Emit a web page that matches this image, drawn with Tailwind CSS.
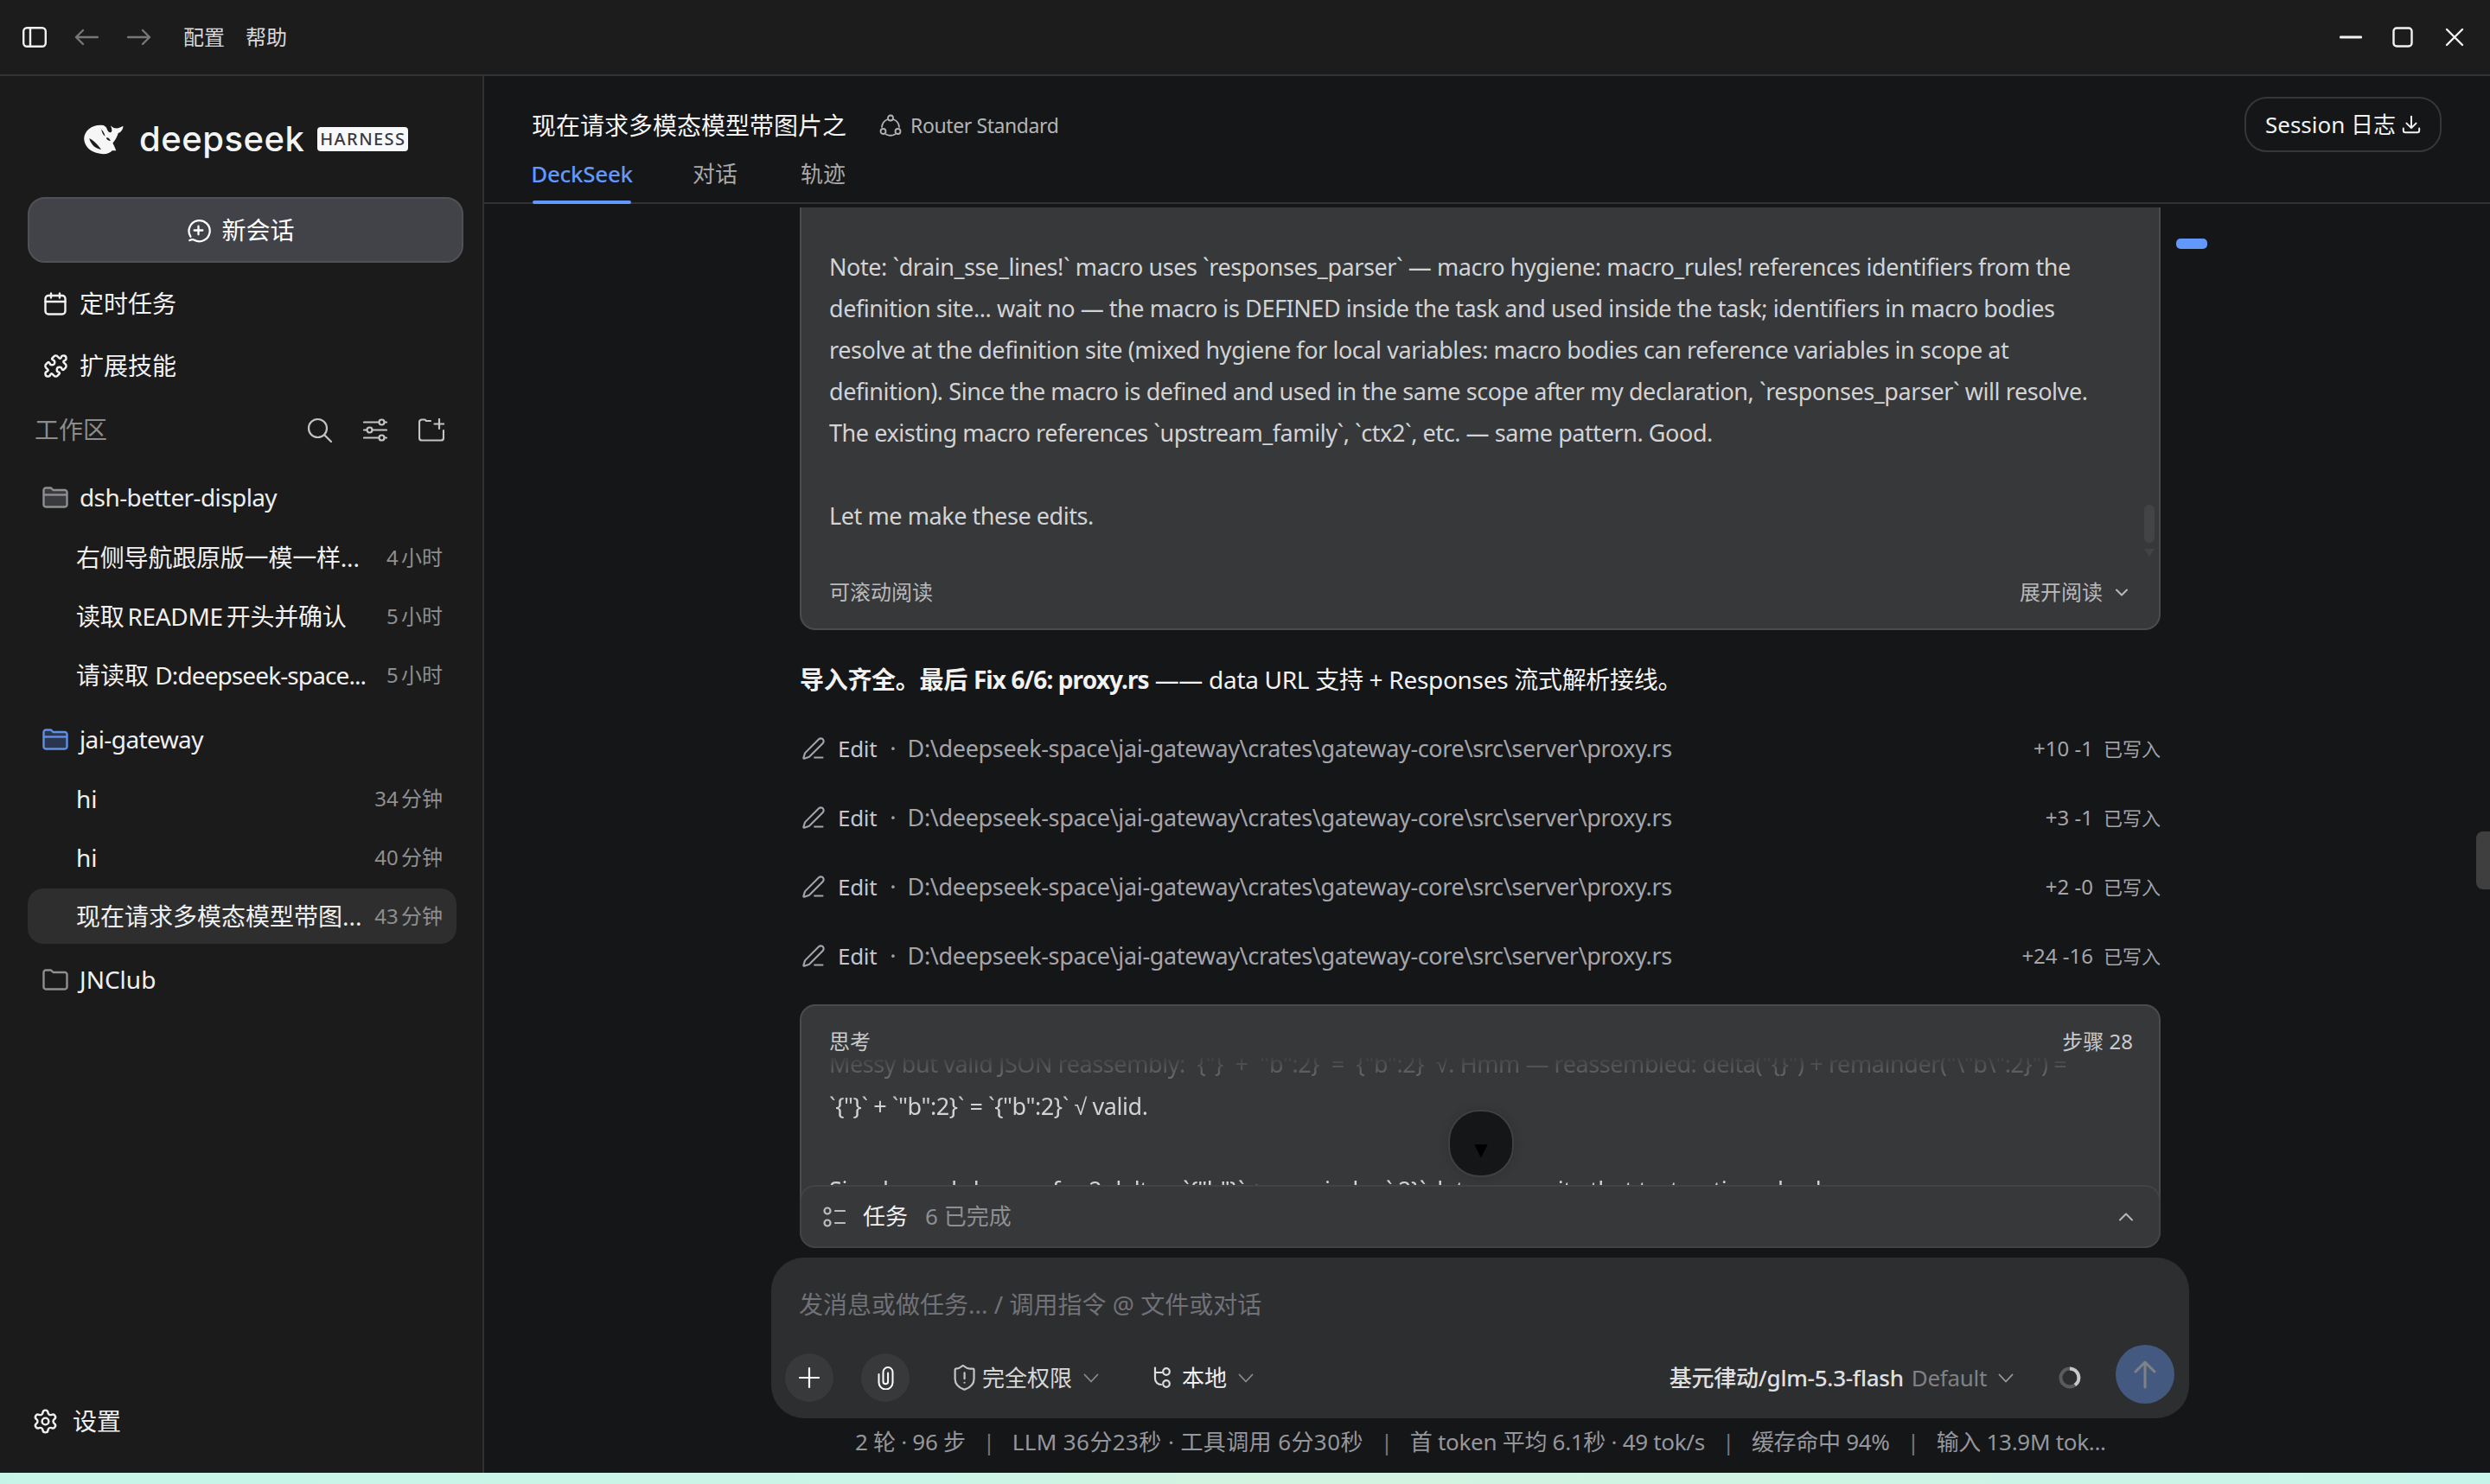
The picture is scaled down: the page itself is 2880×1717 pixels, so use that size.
<!DOCTYPE html>
<html lang="zh">
<head>
<meta charset="utf-8">
<title>DeepSeek Harness</title>
<script src="https://cdn.jsdelivr.net/npm/@tailwindcss/browser@4"></script>
</head>
<body class="bg-[#151618]">
<div class="w-[2880px] h-[1717px] overflow-hidden flex flex-col text-[#e8e8e8] [font-family:'Noto_Sans','Noto_Sans_CJK_SC',sans-serif]">
  <!-- title bar -->
  <header class="h-[88px] shrink-0 flex items-center bg-[#1c1c1c] border-b-2 border-[#333333] pl-[26px] pr-[30px]">
    <svg class="w-[28px] h-[24px] text-[#f0f0f0]" viewBox="0 0 28 24" fill="none" stroke="currentColor" stroke-width="2.4"><rect x="1.2" y="1.2" width="25.6" height="21.6" rx="4"/><path d="M9 1.5v21"/></svg>
    <svg class="ml-[32px] w-[28px] h-[22px] text-[#777777]" viewBox="0 0 28 22" fill="none" stroke="currentColor" stroke-width="2.4" stroke-linecap="round" stroke-linejoin="round"><path d="M27 11H2M10 3l-8 8 8 8"/></svg>
    <svg class="ml-[33px] w-[28px] h-[22px] text-[#777777]" viewBox="0 0 28 22" fill="none" stroke="currentColor" stroke-width="2.4" stroke-linecap="round" stroke-linejoin="round"><path d="M1 11h25M18 3l8 8-8 8"/></svg>
    <span class="ml-[37px] text-[24px] text-[#d8d8d8]">配置</span>
    <span class="ml-[24px] text-[24px] text-[#d8d8d8]">帮助</span>
    <div class="ml-auto flex items-center text-[#f2f2f2]">
      <svg class="w-[26px] h-[4px]" viewBox="0 0 26 4"><rect width="26" height="3" y="0.5" rx="1" fill="currentColor"/></svg>
      <svg class="ml-[35px] w-[24px] h-[24px]" viewBox="0 0 24 24" fill="none" stroke="currentColor" stroke-width="2.4"><rect x="1.5" y="1.5" width="21" height="21" rx="3.5"/></svg>
      <svg class="ml-[37px] w-[22px] h-[22px]" viewBox="0 0 22 22" fill="none" stroke="currentColor" stroke-width="2.4" stroke-linecap="round"><path d="M2 2l18 18M20 2L2 20"/></svg>
    </div>
  </header>

  <div class="flex-1 min-h-0 flex">
    <!-- sidebar -->
    <aside class="w-[560px] shrink-0 bg-[#1b1b1b] border-r-2 border-[#303030] flex flex-col">
      <div class="mt-[55px] mb-[49px] h-[36px] flex items-center pl-[95px]">
        <svg class="w-[50px] h-[38px]" viewBox="0 0 150 120"><path fill="#f6f6f6" d="M3 58C4 32 28 8 66 9c12 0 19 6 22 17 4 10 12 12 16 6 2-6 0-12-4-22 6 6 12 10 18 10 10 2 18-4 28-8 0 12-8 24-18 26-4 12-10 26-20 36 4 8 8 16 12 28h-14c-8 10-28 16-48 10C28 108 4 88 3 58Z"/><path fill="#1b1b1b" d="M22 58c12 4 28 18 44 40-18-2-36-14-44-40ZM84 56c6-4 12 2 16 10-8 0-14-4-16-10ZM66 24c8 8 12 16 14 26-8-6-12-14-14-26Z"/></svg>
        <span class="ml-[16px] text-[40px] leading-[36px] font-medium tracking-[0.5px] text-[#f4f4f4] [font-family:'Inter',sans-serif]">deepseek</span>
        <span class="ml-[15px] h-[28px] w-[105px] flex items-center justify-center rounded-[4px] bg-[#f8f9fb] text-[20px] font-medium tracking-[1.4px] text-[#3a3a3e]">HARNESS</span>
      </div>
      <button class="ml-[32px] w-[504px] h-[76px] shrink-0 rounded-[20px] bg-[#424349] border-2 border-[#505157] flex items-center justify-center pr-[12px] text-[28px] text-white">
        <svg class="w-[29px] h-[29px] mr-[12px]" viewBox="0 0 24 24" fill="none" stroke="currentColor" stroke-width="1.9" stroke-linecap="round" stroke-linejoin="round"><path d="M4.5 18A10 10 0 1 1 8 21.3C7 20.4 5.5 20.6 3.6 21.6"/><path d="M8 12h8M12 8v8"/></svg>
        新会话
      </button>
      <nav class="mt-[11px] text-[28px] text-[#f2f2f2]">
        <a class="h-[72px] flex items-center pl-[51px]">
          <svg class="w-[26px] h-[27px] mr-[15px]" viewBox="0 0 26 27" fill="none" stroke="currentColor" stroke-width="2.4" stroke-linecap="round"><rect x="1.5" y="4" width="23" height="21.5" rx="3.5"/><path d="M8 1.5v5M18 1.5v5M1.5 11h23"/></svg>
          定时任务
        </a>
        <a class="h-[72px] flex items-center pl-[50px]">
          <svg class="w-[29px] h-[29px] mr-[13px]" viewBox="0 0 24 24" fill="none" stroke="currentColor" stroke-width="2" stroke-linecap="round" stroke-linejoin="round"><path d="M15.39 4.39a1 1 0 0 0 1.68-.474 2.5 2.5 0 1 1 3.014 3.015 1 1 0 0 0-.474 1.68l1.683 1.682a2.414 2.414 0 0 1 0 3.414L19.61 15.39a1 1 0 0 1-1.68-.474 2.5 2.5 0 1 0-3.014 3.015 1 1 0 0 1 .474 1.68l-1.683 1.682a2.414 2.414 0 0 1-3.414 0L8.61 19.61a1 1 0 0 0-1.68.474 2.5 2.5 0 1 1-3.014-3.015 1 1 0 0 0 .474-1.68l-1.683-1.682a2.414 2.414 0 0 1 0-3.414L4.39 8.61a1 1 0 0 1 1.68.474 2.5 2.5 0 1 0 3.014-3.015 1 1 0 0 1-.474-1.68l1.683-1.682a2.414 2.414 0 0 1 3.414 0z"/></svg>
          扩展技能
        </a>
      </nav>
      <div class="mt-[8px] h-[60px] flex items-center pl-[40px] text-[28px] text-[#8c8c8c]">
        工作区
        <div class="ml-auto mr-[44px] flex items-center text-[#c4c4c4] gap-[36px]">
          <svg class="w-[29px] h-[29px]" viewBox="0 0 29 29" fill="none" stroke="currentColor" stroke-width="2.2" stroke-linecap="round"><circle cx="12.5" cy="12.5" r="10.5"/><path d="M21 21l7 7"/></svg>
          <svg class="w-[28px] h-[27px]" viewBox="0 0 28 27" fill="none" stroke="currentColor" stroke-width="2.2" stroke-linecap="round"><path d="M1 4.5h17M25 4.5h2M1 13.5h3M11 13.5h16M1 22.5h17M25 22.5h2"/><circle cx="21.5" cy="4.5" r="3"/><circle cx="7.5" cy="13.5" r="3"/><circle cx="21.5" cy="22.5" r="3"/></svg>
          <svg class="w-[30px] h-[27px]" viewBox="0 0 30 27" fill="none" stroke="currentColor" stroke-width="2.2" stroke-linecap="round" stroke-linejoin="round"><path d="M14 3H9L7.5 1.5H4A3 3 0 0 0 1 4.5v18a3 3 0 0 0 3 3h22a3 3 0 0 0 3-3V14"/><path d="M24 1v11M18.500 6.500h11"/></svg>
        </div>
      </div>
      <ul class="mt-[14px] text-[28px] text-[#f0f0f0]">
        <li class="h-[68px] flex items-center pl-[49px] text-[#eeeeee]">
          <svg class="w-[30px] h-[25px] mr-[13px]" viewBox="0 0 30 25" fill="none" stroke="#8f8f92" stroke-width="2.4" stroke-linejoin="round"><path d="M1.500 4a2.500 2.500 0 0 1 2.500-2.500h6l2.500 2.500h13.500a2.500 2.500 0 0 1 2.500 2.500V21a2.500 2.500 0 0 1-2.500 2.500H4A2.500 2.500 0 0 1 1.500 21Z" fill="#3a3b3e"/><path d="M2 9.500h26"/></svg>
          <span class="tracking-[-0.6px]">dsh-better-display</span>
        </li>
        <li class="h-[68px] mt-[2px] ml-[32px] w-[496px] pl-[56px] pr-[16px] flex items-center justify-between"><span class="tracking-[-0.2px]">右侧导航跟原版一模一样...</span><span class="text-[24px] text-[#8f8f8f] [word-spacing:-3px]">4 小时</span></li>
        <li class="h-[68px] ml-[32px] w-[496px] pl-[56px] pr-[16px] flex items-center justify-between"><span class="tracking-[-0.3px] [word-spacing:-3px]">读取 README 开头并确认</span><span class="text-[24px] text-[#8f8f8f] [word-spacing:-3px]">5 小时</span></li>
        <li class="h-[68px] ml-[32px] w-[496px] pl-[56px] pr-[16px] flex items-center justify-between"><span>请读取 <span class="tracking-[-0.9px]">D:deepseek-space...</span></span><span class="text-[24px] text-[#8f8f8f] [word-spacing:-3px]">5 小时</span></li>
        <li class="h-[68px] mt-[6px] flex items-center pl-[49px]">
          <svg class="w-[30px] h-[25px] mr-[13px]" viewBox="0 0 30 25" fill="none" stroke="#5f8fe8" stroke-width="2.4" stroke-linejoin="round"><path d="M1.500 4a2.500 2.500 0 0 1 2.500-2.500h6l2.500 2.500h13.500a2.500 2.500 0 0 1 2.500 2.500V21a2.500 2.500 0 0 1-2.500 2.500H4A2.500 2.500 0 0 1 1.500 21Z" fill="#2a3550"/><path d="M2 9.500h26"/></svg>
          <span class="tracking-[-0.6px]">jai-gateway</span>
        </li>
        <li class="h-[68px] mt-[1px] ml-[32px] w-[496px] pl-[56px] pr-[16px] flex items-center justify-between"><span>hi</span><span class="text-[24px] text-[#8f8f8f] [word-spacing:-3px]">34 分钟</span></li>
        <li class="h-[68px] ml-[32px] w-[496px] pl-[56px] pr-[16px] flex items-center justify-between"><span>hi</span><span class="text-[24px] text-[#8f8f8f] [word-spacing:-3px]">40 分钟</span></li>
        <li class="h-[64px] my-[2px] ml-[32px] w-[496px] pl-[56px] pr-[16px] flex items-center justify-between rounded-[18px] bg-[#2e2e2e]"><span>现在请求多模态模型带图...</span><span class="text-[24px] text-[#8f8f8f] [word-spacing:-3px]">43 分钟</span></li>
        <li class="h-[68px] mt-[7px] flex items-center pl-[49px]">
          <svg class="w-[30px] h-[25px] mr-[13px]" viewBox="0 0 30 25" fill="none" stroke="#8f8f92" stroke-width="2.4" stroke-linejoin="round"><path d="M1.500 4a2.500 2.500 0 0 1 2.500-2.500h6l2.500 2.500h13.500a2.500 2.500 0 0 1 2.500 2.500V21a2.500 2.500 0 0 1-2.500 2.500H4A2.500 2.500 0 0 1 1.500 21Z"/></svg>
          JNClub
        </li>
      </ul>
      <div class="mt-auto mb-[30px] h-[60px] flex items-center pl-[37px] text-[28px] text-[#f0f0f0]">
        <svg class="w-[31px] h-[31px] mr-[16px]" viewBox="0 0 24 24" fill="none" stroke="currentColor" stroke-width="1.9" stroke-linecap="round" stroke-linejoin="round"><path d="M9.671 4.136a2.34 2.34 0 0 1 4.659 0 2.34 2.34 0 0 0 3.319 1.915 2.34 2.34 0 0 1 2.33 4.033 2.34 2.34 0 0 0 0 3.831 2.34 2.34 0 0 1-2.33 4.033 2.34 2.34 0 0 0-3.319 1.915 2.34 2.34 0 0 1-4.659 0 2.34 2.34 0 0 0-3.32-1.915 2.34 2.34 0 0 1-2.33-4.033 2.34 2.34 0 0 0 0-3.831A2.34 2.34 0 0 1 6.35 6.051a2.34 2.34 0 0 0 3.319-1.915"/><circle cx="12" cy="12" r="3"/></svg>
        设置
      </div>
    </aside>

    <!-- main -->
    <main class="relative flex-1 min-w-0 flex flex-col bg-[#151618]">
      <div class="h-[148px] shrink-0 border-b-2 border-[#303133] pl-[55px] pr-[55px] flex flex-col">
        <div class="h-[88px] flex items-center">
          <h1 class="text-[28px] text-[#f4f4f4] font-normal pt-[26px]">现在请求多模态模型带图片之</h1>
          <div class="pt-[26px] flex items-center ml-[38px] text-[23px] tracking-[-0.4px] text-[#b4b4b4]">
            <svg class="w-[26px] h-[26px] mr-[10px]" viewBox="0 0 26 26" fill="none" stroke="currentColor" stroke-width="1.8" stroke-linecap="round"><circle cx="13" cy="4.500" r="3"/><circle cx="4.500" cy="20" r="3"/><circle cx="21.500" cy="20" r="3"/><path d="M10 6A10.500 10.500 0 0 0 3 15M16 6A10.500 10.500 0 0 1 23 15M8 23.500a11 11 0 0 0 10 0"/></svg>
            Router Standard
          </div>
          <button class="ml-auto mt-[24px] mr-[1px] h-[64px] w-[228px] rounded-[26px] border-2 border-[#36373a] flex items-center justify-center text-[26px] text-[#f2f2f2]">
            Session 日志
            <svg class="ml-[7px] w-[22px] h-[22px]" viewBox="0 0 24 24" fill="none" stroke="currentColor" stroke-width="2.200" stroke-linecap="round" stroke-linejoin="round"><path d="M12 2v14M6 10.500l6 6 6-6M2 17v2.500A2.500 2.500 0 0 0 4.500 22h15a2.500 2.500 0 0 0 2.500-2.500V17"/></svg>
          </button>
        </div>
        <nav class="flex-1 flex text-[26px] text-[#a8a8a8]">
          <a class="relative ml-[1px] w-[114px] flex items-center justify-center h-[59px] pb-[8px] font-medium tracking-[-0.3px] text-[#6398fb] after:absolute after:left-0 after:right-0 after:bottom-[-1px] after:h-[4px] after:rounded-[2px] after:bg-[#6398fb]">DeckSeek</a>
          <a class="ml-[71px] h-[59px] pb-[8px] flex items-center">对话</a>
          <a class="ml-[73px] h-[59px] pb-[8px] flex items-center">轨迹</a>
        </nav>
      </div>

      <!-- side marker & page scrollbar -->
      <span class="absolute left-[1957px] top-[188px] w-[36px] h-[12px] rounded-[5px] bg-[#6398fb]"></span>
      <span class="absolute right-0 top-[874px] w-[16px] h-[67px] rounded-l-[8px] bg-[#3f3f3f]"></span>

      <section class="flex-1 min-h-0 overflow-hidden pt-[4px] pl-[365px]">
        <div class="w-[1574px] flex flex-col">
          <div class="relative h-[489px] rounded-b-[18px] bg-[#37383a] border-x-2 border-b-2 border-[#4a4b4d] px-[32px] pt-[45px]">
            <div class="text-[27px] leading-[48px] text-[#d2d3d5] tracking-[-0.43px] whitespace-nowrap">
              <p>Note: `drain_sse_lines!` macro uses `responses_parser` — macro hygiene: macro_rules! references identifiers from the</p>
              <p>definition site... wait no — the macro is DEFINED inside the task and used inside the task; identifiers in macro bodies</p>
              <p>resolve at the definition site (mixed hygiene for local variables: macro bodies can reference variables in scope at</p>
              <p>definition). Since the macro is defined and used in the same scope after my declaration, `responses_parser` will resolve.</p>
              <p>The existing macro references `upstream_family`, `ctx2`, etc. — same pattern. Good.</p>
              <p class="h-[48px]"></p>
              <p>Let me make these edits.</p>
            </div>
            <div class="mt-[42px] h-[44px] flex items-center justify-between text-[24px] text-[#b9babc]">
              <span>可滚动阅读</span>
              <span class="flex items-center">展开阅读
                <svg class="ml-[15px] w-[14px] h-[9px] mr-[4px]" viewBox="0 0 14 9" fill="none" stroke="currentColor" stroke-width="2" stroke-linecap="round" stroke-linejoin="round"><path d="M1 1.500l6 6 6-6"/></svg>
              </span>
            </div>
            <span class="absolute right-[5px] top-[344px] w-[12px] h-[44px] rounded-[6px] bg-[#434446]"></span>
            <span class="absolute right-[5px] top-[395px] w-0 h-0 border-x-[6px] border-x-transparent border-t-[9px] border-t-[#434446]"></span>
          </div>

          <p class="mt-[33px] h-[48px] leading-[48px] text-[28px] text-[#f2f2f2] tracking-[-0.3px] whitespace-nowrap"><strong class="font-bold">导入齐全。最后 <span class="tracking-[-0.9px]">Fix 6/6: proxy.rs</span></strong> —— data URL 支持 + Responses 流式解析接线。</p>

          <ul class="mt-[16px] text-[27px] text-[#a3a5ab]">
            <li class="h-[80px] flex items-center">
              <svg class="ml-[2px] w-[28px] h-[28px]" viewBox="0 0 24 24" fill="none" stroke="currentColor" stroke-width="1.800" stroke-linecap="round" stroke-linejoin="round"><path d="M13 21h8"/><path d="M21.174 6.812a1 1 0 0 0-3.986-3.987L3.842 16.174a2 2 0 0 0-.5.83l-1.321 4.352a.5.5 0 0 0 .623.622l4.353-1.32a2 2 0 0 0 .83-.497z"/></svg>
              <span class="ml-[14px] text-[26px] tracking-[-0.3px] text-[#c4c5c9]">Edit</span><span class="ml-[15px]">·</span><span class="ml-[13px] tracking-[-0.35px]">D:\deepseek-space\jai-gateway\crates\gateway-core\src\server\proxy.rs</span>
              <span class="ml-auto text-[24px]">+10 -1</span><span class="ml-[12px] text-[22px] text-[#a3a5ab]">已写入</span>
            </li>
            <li class="h-[80px] flex items-center">
              <svg class="ml-[2px] w-[28px] h-[28px]" viewBox="0 0 24 24" fill="none" stroke="currentColor" stroke-width="1.800" stroke-linecap="round" stroke-linejoin="round"><path d="M13 21h8"/><path d="M21.174 6.812a1 1 0 0 0-3.986-3.987L3.842 16.174a2 2 0 0 0-.5.83l-1.321 4.352a.5.5 0 0 0 .623.622l4.353-1.32a2 2 0 0 0 .83-.497z"/></svg>
              <span class="ml-[14px] text-[26px] tracking-[-0.3px] text-[#c4c5c9]">Edit</span><span class="ml-[15px]">·</span><span class="ml-[13px] tracking-[-0.35px]">D:\deepseek-space\jai-gateway\crates\gateway-core\src\server\proxy.rs</span>
              <span class="ml-auto text-[24px]">+3 -1</span><span class="ml-[12px] text-[22px]">已写入</span>
            </li>
            <li class="h-[80px] flex items-center">
              <svg class="ml-[2px] w-[28px] h-[28px]" viewBox="0 0 24 24" fill="none" stroke="currentColor" stroke-width="1.800" stroke-linecap="round" stroke-linejoin="round"><path d="M13 21h8"/><path d="M21.174 6.812a1 1 0 0 0-3.986-3.987L3.842 16.174a2 2 0 0 0-.5.83l-1.321 4.352a.5.5 0 0 0 .623.622l4.353-1.32a2 2 0 0 0 .83-.497z"/></svg>
              <span class="ml-[14px] text-[26px] tracking-[-0.3px] text-[#c4c5c9]">Edit</span><span class="ml-[15px]">·</span><span class="ml-[13px] tracking-[-0.35px]">D:\deepseek-space\jai-gateway\crates\gateway-core\src\server\proxy.rs</span>
              <span class="ml-auto text-[24px]">+2 -0</span><span class="ml-[12px] text-[22px]">已写入</span>
            </li>
            <li class="h-[80px] flex items-center">
              <svg class="ml-[2px] w-[28px] h-[28px]" viewBox="0 0 24 24" fill="none" stroke="currentColor" stroke-width="1.800" stroke-linecap="round" stroke-linejoin="round"><path d="M13 21h8"/><path d="M21.174 6.812a1 1 0 0 0-3.986-3.987L3.842 16.174a2 2 0 0 0-.5.83l-1.321 4.352a.5.5 0 0 0 .623.622l4.353-1.32a2 2 0 0 0 .83-.497z"/></svg>
              <span class="ml-[14px] text-[26px] tracking-[-0.3px] text-[#c4c5c9]">Edit</span><span class="ml-[15px]">·</span><span class="ml-[13px] tracking-[-0.35px]">D:\deepseek-space\jai-gateway\crates\gateway-core\src\server\proxy.rs</span>
              <span class="ml-auto text-[24px]">+24 -16</span><span class="ml-[12px] text-[22px]">已写入</span>
            </li>
          </ul>

          <div class="relative mt-[16px] h-[281px] rounded-[18px] bg-[#37383a] border-2 border-[#4a4b4d] overflow-hidden">
            <div class="flex justify-between items-center pl-[32px] pr-[30px] pt-[22px] h-[60px] text-[24px] text-[#c9cacc]"><span>思考</span><span>步骤 28</span></div>
            <div class="h-[147px] overflow-hidden px-[32px] text-[27px] leading-[48px] text-[#d2d3d5] tracking-[-0.43px] whitespace-nowrap [mask-image:linear-gradient(to_bottom,rgba(0,0,0,0.05),rgba(0,0,0,0.4)_28px,#000_50px)]">
              <div class="-mt-[17px]">
                <p>Messy but valid JSON reassembly: `{"}` + `"b":2}` = `{"b":2}` <span class="[font-family:'Liberation_Sans',sans-serif]">√</span>. Hmm — reassembled: delta("{}") + remainder("\"b\":2}") =</p>
                <p>`{"}` + `"b":2}` = `{"b":2}` <span class="[font-family:'Liberation_Sans',sans-serif]">√</span> valid.</p>
                <p class="h-[48px]"></p>
                <p>Simpler and cleaner: for 2 deltas: `{"b"}` + remainder `:2}`, let me rewrite that test as time check.</p>
              </div>
            </div>
            <div class="absolute left-[748px] top-[120px] w-[76px] h-[78px] rounded-[36px] bg-[#151618] border-2 border-[#3f4042] shadow-[0_0_12px_rgba(0,0,0,0.15)] flex items-end justify-center pb-[20px] text-[20px] leading-none text-black [font-family:'DejaVu_Sans',sans-serif]">▼</div>
          </div>
          <div class="relative -mt-[72px] h-[73px] rounded-[18px] bg-[#37383a] border-2 border-[#424345] flex items-center pl-[25px] pr-[30px] text-[26px]">
            <svg class="w-[26px] h-[26px] text-[#bbbbbb]" viewBox="0 0 26 26" fill="none" stroke="currentColor" stroke-width="2.200" stroke-linecap="round"><circle cx="5" cy="6" r="3.500"/><circle cx="5" cy="20" r="3.500"/><path d="M14 6h11M14 20h11"/></svg>
            <span class="ml-[20px] text-[#f0f0f0]">任务</span>
            <span class="ml-[20px] text-[#8e8f93]">6 已完成</span>
            <svg class="ml-auto w-[16px] h-[10px] text-[#b8b8b8]" viewBox="0 0 16 10" fill="none" stroke="currentColor" stroke-width="2" stroke-linecap="round" stroke-linejoin="round"><path d="M1 8.500l7-7 7 7"/></svg>
          </div>
        </div>
      </section>

      <!-- composer -->
      <div class="ml-[332px] w-[1640px] h-[186px] shrink-0 rounded-[38px] bg-[#2d2e30] flex flex-col">
        <div class="mt-[34px] pl-[32px] h-[40px] flex items-center text-[28px] text-[#717277]">发消息或做任务... / 调用指令 @ 文件或对话</div>
        <div class="mt-auto mb-[9px] h-[76px] flex items-center pl-[16px] pr-[17px] text-[26px] text-[#d8d8d8]">
          <span class="w-[56px] h-[56px] rounded-full bg-[#38393b] flex items-center justify-center text-white">
            <svg class="w-[26px] h-[26px]" viewBox="0 0 26 26" fill="none" stroke="currentColor" stroke-width="2.200" stroke-linecap="round"><path d="M13 2v22M2 13h22"/></svg>
          </span>
          <span class="ml-[32px] w-[56px] h-[56px] rounded-full bg-[#38393b] flex items-center justify-center text-white">
            <svg class="w-[21px] h-[28px]" viewBox="0 0 21 28" fill="none" stroke="currentColor" stroke-width="2" stroke-linecap="round" stroke-linejoin="round"><path d="M2.500 10v9.500a8 8 0 0 0 16 0V7.500a5.500 5.500 0 0 0-11 0v11a2.800 2.800 0 0 0 5.600 0V8.500"/></svg>
          </span>
          <svg class="ml-[49px] w-[28px] h-[30px] text-[#c4c4c4]" viewBox="0 0 24 26" fill="none" stroke="currentColor" stroke-width="1.900" stroke-linecap="round" stroke-linejoin="round"><path d="M22 14c0 6-4.200 9-9.200 10.800a1 1 0 0 1-.7 0C7 23 3 20 3 14V5a1 1 0 0 1 1-1c2 0 4.500-1.200 6.200-2.700a1.200 1.200 0 0 1 1.600 0C13.500 2.800 16 4 18 4h3a1 1 0 0 1 1 1z"/><path d="M12.500 8v6M12.500 18h.01"/></svg>
          <span class="ml-[7px]">完全权限</span>
          <svg class="ml-[13px] w-[18px] h-[11px] text-[#8a8b8f]" viewBox="0 0 18 11" fill="none" stroke="currentColor" stroke-width="1.800" stroke-linecap="round" stroke-linejoin="round"><path d="M1.500 1.500L9 9.500l7.500-8"/></svg>
          <svg class="ml-[62px] w-[22px] h-[26px] text-[#dddddd]" viewBox="0 0 22 26" fill="none" stroke="currentColor" stroke-width="2.200" stroke-linecap="round"><path d="M3 1.500V14a7 7 0 0 0 7 7M3 7h8"/><circle cx="16" cy="6" r="3.800"/><circle cx="16" cy="20" r="3.800"/></svg>
          <span class="ml-[12px] text-[#f0f0f0]">本地</span>
          <svg class="ml-[13px] w-[18px] h-[11px] text-[#8a8b8f]" viewBox="0 0 18 11" fill="none" stroke="currentColor" stroke-width="1.800" stroke-linecap="round" stroke-linejoin="round"><path d="M1.500 1.500L9 9.500l7.500-8"/></svg>
          <span class="ml-auto text-[#e0e0e0] font-medium tracking-[-0.25px]">基元律动/glm-5.3-flash</span>
          <span class="ml-[9px] text-[#808185] tracking-[-0.3px]">Default</span>
          <svg class="ml-[13px] w-[18px] h-[11px] text-[#9a9b9f]" viewBox="0 0 18 11" fill="none" stroke="currentColor" stroke-width="1.800" stroke-linecap="round" stroke-linejoin="round"><path d="M1.500 1.500L9 9.500l7.500-8"/></svg>
          <svg class="ml-[52px] w-[26px] h-[26px]" viewBox="0 0 26 26" fill="none" stroke-width="4"><circle cx="13" cy="13" r="10.500" stroke="#5a5b5f"/><path d="M13 2.500a10.500 10.500 0 0 1 6 19" stroke="#c8c8c8"/></svg>
          <span class="ml-[40px] self-start w-[68px] h-[68px] rounded-full bg-[#44597f] flex items-center justify-center text-[#7f8187]">
            <svg class="w-[28px] h-[34px]" viewBox="0 0 28 34" fill="none" stroke="currentColor" stroke-width="3" stroke-linecap="round" stroke-linejoin="round"><path d="M14 32V3M3 14L14 3l11 11"/></svg>
          </span>
        </div>
      </div>
      <div class="h-[63px] shrink-0 pl-[429px] pb-[8px] flex items-center text-[26px] text-[#96979c] tracking-[-0.3px] whitespace-nowrap">
        <span>2 轮 · 96 步</span><span class="mx-[20px] text-[#77787c]">|</span><span class="tracking-[0.4px]">LLM 36分23秒 · 工具调用 6分30秒</span><span class="mx-[20px] text-[#77787c]">|</span><span>首 token 平均 6.1秒 · 49 tok/s</span><span class="mx-[20px] text-[#77787c]">|</span><span>缓存命中 94%</span><span class="mx-[20px] text-[#77787c]">|</span><span>输入 13.9M tok...</span>
      </div>
    </main>
  </div>
  <div class="h-[13px] shrink-0 bg-[linear-gradient(90deg,#c6f5e8,#ccf5e6_40%,#d4f4e0_50%,#c8f5ea)]"></div>
</div>
</body>
</html>
